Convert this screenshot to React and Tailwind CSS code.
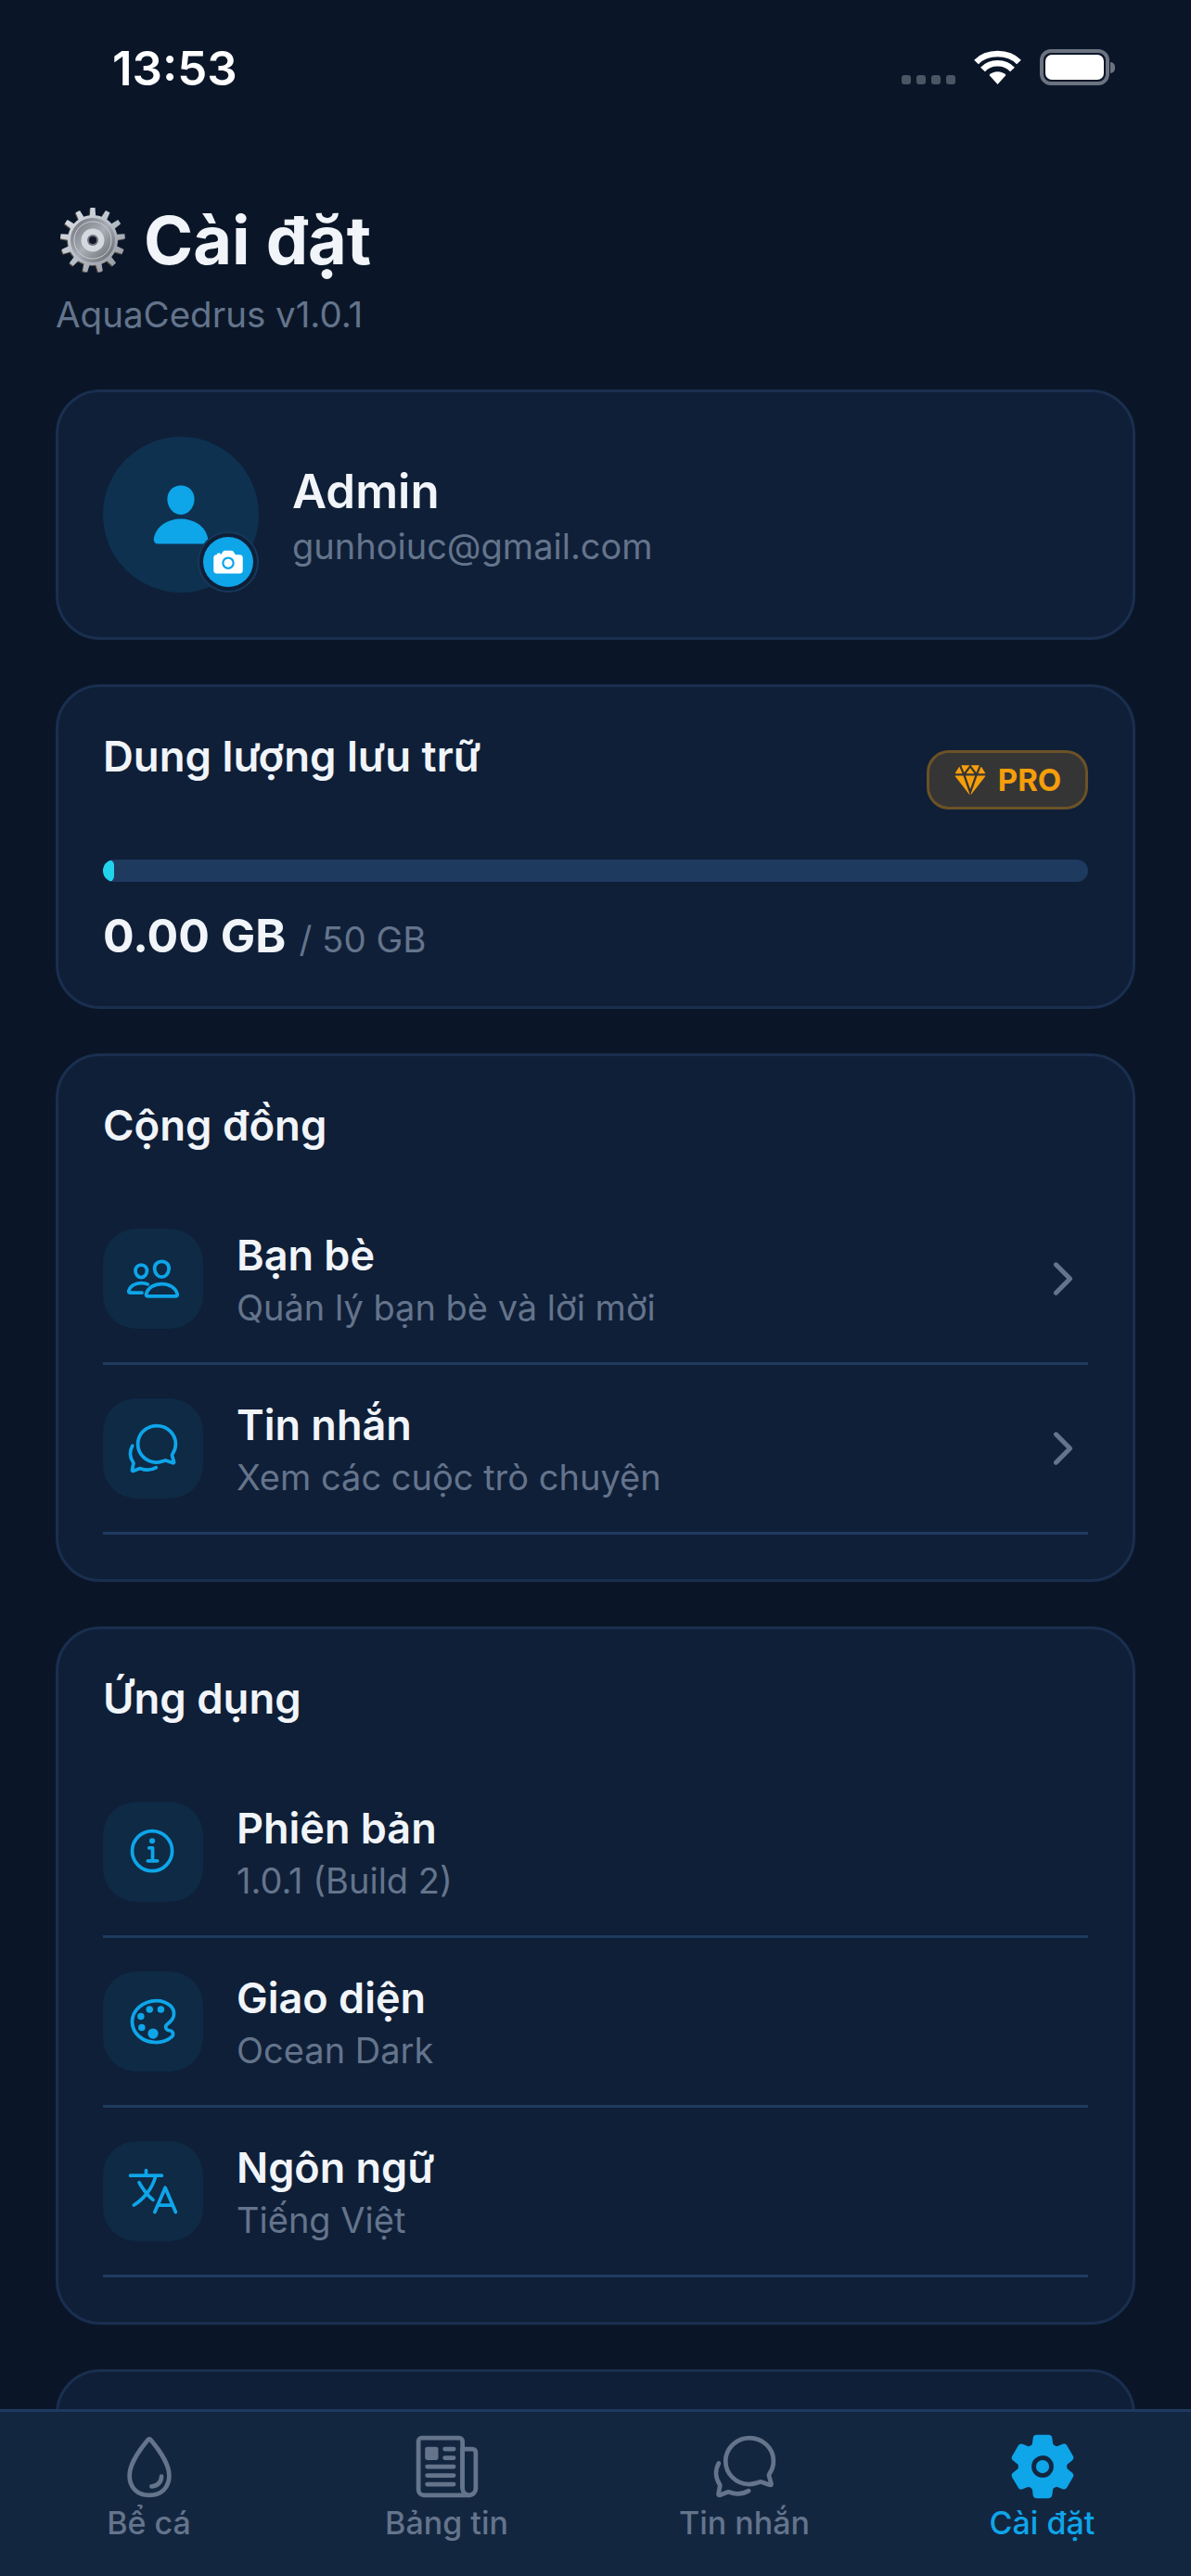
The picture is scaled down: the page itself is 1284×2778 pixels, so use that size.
import {
  IoCamera,
  IoChatbubblesOutline,
  IoChevronForward,
  IoColorPaletteOutline,
  IoDiamond,
  IoInformationCircleOutline,
  IoLanguageOutline,
  IoNewspaperOutline,
  IoPeopleOutline,
  IoPerson,
  IoSettings,
  IoWaterOutline,
} from "react-icons/io5";

const community = [
  { icon: IoPeopleOutline, title: "Bạn bè", sub: "Quản lý bạn bè và lời mời", arrow: true },
  { icon: IoChatbubblesOutline, title: "Tin nhắn", sub: "Xem các cuộc trò chuyện", arrow: true },
];

const app = [
  { icon: IoInformationCircleOutline, title: "Phiên bản", sub: "1.0.1 (Build 2)" },
  { icon: IoColorPaletteOutline, title: "Giao diện", sub: "Ocean Dark" },
  { icon: IoLanguageOutline, title: "Ngôn ngữ", sub: "Tiếng Việt" },
];

const tabs = [
  { icon: IoWaterOutline, label: "Bể cá" },
  { icon: IoNewspaperOutline, label: "Bảng tin" },
  { icon: IoChatbubblesOutline, label: "Tin nhắn" },
  { icon: IoSettings, label: "Cài đặt", active: true },
];

// the gear emoji, 13 teeth
function gearPath() {
  const teeth = 13;
  const pts = [];
  for (let i = 0; i < teeth; i++) {
    const a = (i / teeth) * Math.PI * 2 - Math.PI / 2;
    const step = (Math.PI * 2) / teeth;
    [
      [-0.5, 27],
      [-0.24, 27],
      [-0.15, 35],
      [0.15, 35],
      [0.24, 27],
    ].forEach(([o, r]) => {
      const t = a + o * step;
      pts.push(`${(35 + r * Math.cos(t)).toFixed(2)} ${(35 + r * Math.sin(t)).toFixed(2)}`);
    });
  }
  return "M" + pts.join("L") + "Z";
}

function GearEmoji() {
  return (
    <svg width="70" height="70" viewBox="0 0 70 70" className="shrink-0 ml-[5px]">
      <defs>
        <linearGradient id="gearBody" x1="0" y1="0" x2="1" y2="1">
          <stop offset="0" stopColor="#e2e6ec" />
          <stop offset="0.55" stopColor="#b4bac4" />
          <stop offset="1" stopColor="#8b8f98" />
        </linearGradient>
        <linearGradient id="gearRing" x1="0" y1="0" x2="1" y2="1">
          <stop offset="0" stopColor="#6d7078" />
          <stop offset="0.5" stopColor="#a9adb5" />
          <stop offset="1" stopColor="#5d6067" />
        </linearGradient>
      </defs>
      <path d={gearPath()} fill="#5f5648" transform="translate(-0.8 1)" />
      <path d={gearPath()} fill="url(#gearBody)" />
      <circle cx="35" cy="35" r="24" fill="url(#gearRing)" />
      <circle cx="35" cy="35" r="20" fill="none" stroke="#c7cad0" strokeWidth="1" />
      <circle cx="35" cy="35" r="12.5" fill="#d5d9df" />
      <circle cx="35" cy="35" r="6" fill="#6f7379" />
      <circle cx="35" cy="35" r="4" fill="#111827" />
    </svg>
  );
}

function StatusBar() {
  return (
    <div className="h-[132px] shrink-0 flex items-start justify-between pl-[121px] pr-[82px] pt-[46px]">
      <span className="text-[51px] leading-[56px] font-semibold text-white">13:53</span>
      <div className="flex items-start pt-[7px]">
        <div className="flex gap-[6px] mt-[28px] mr-[20px]">
          <span className="w-[10px] h-[10px] rounded-[3px] bg-[#4b5563]" />
          <span className="w-[10px] h-[10px] rounded-[3px] bg-[#4b5563]" />
          <span className="w-[10px] h-[10px] rounded-[3px] bg-[#4b5563]" />
          <span className="w-[10px] h-[10px] rounded-[3px] bg-[#4b5563]" />
        </div>
        <svg width="51" height="38" viewBox="0 0 51 38" className="mr-[20px]">
          <path d="M25.5 38 L16.5 28 C21 23 30 23 34.5 28 Z" fill="#fff" />
          <path d="M9.5 22 C17.5 13 33.5 13 41.5 22" fill="none" stroke="#fff" strokeWidth="6.5" />
          <path d="M2.5 14 C14 2 37 2 48.5 14" fill="none" stroke="#fff" strokeWidth="6.5" />
        </svg>
        <div className="flex items-center">
          <div className="w-[75px] h-[39px] rounded-[12px] border-[4px] border-[#6b7280] p-[2px]">
            <div className="w-full h-full rounded-[7px] bg-white" />
          </div>
          <div className="w-[5px] h-[12px] rounded-r-[5px] bg-[#6b7280] ml-[1px]" />
        </div>
      </div>
    </div>
  );
}

function Card({ className = "", children }) {
  return (
    <div className={`rounded-[48px] border-[3px] border-[#1a2f4f] bg-[#0f1f38] p-[48px] ${className}`}>
      {children}
    </div>
  );
}

function Row({ item }) {
  const Icon = item.icon;
  return (
    <div className="flex items-center py-[36px] border-b-[3px] border-[#1e3a5f]">
      <div className="w-[108px] h-[108px] rounded-[36px] bg-[#0e2a45] flex items-center justify-center shrink-0">
        <Icon size={60} className="text-[#0ea5e9]" />
      </div>
      <div className="ml-[36px] flex-1 h-[108px]">
        <div className="text-[45px] leading-[58px] font-semibold text-[#f1f5f9]">{item.title}</div>
        <div className="text-[38px] leading-[50px] text-[#64748b] mt-[2px]">{item.sub}</div>
      </div>
      {item.arrow && <IoChevronForward size={54} className="text-[#64748b]" />}
    </div>
  );
}

function Section({ title, items }) {
  return (
    <Card>
      <div className="text-[45.5px] leading-[54px] font-semibold text-[#f1f5f9] mb-[48px]">{title}</div>
      {items.map((item) => (
        <Row key={item.title} item={item} />
      ))}
    </Card>
  );
}

export default function App() {
  return (
    <div className="w-[1284px] h-[2778px] flex flex-col overflow-hidden bg-[#0a1628] font-['Inter',sans-serif]">
      <StatusBar />

      <main className="flex-1 min-h-0 overflow-hidden px-[60px]">
        <div className="flex items-center gap-[20px] h-[90px] mt-[82px]">
          <GearEmoji />
          <h1 className="text-[72px] leading-[90px] font-bold text-[#f1f5f9]">Cài đặt</h1>
        </div>
        <p className="text-[38.5px] leading-[50px] text-[#64748b] mb-[56px] mt-[10px]">AquaCedrus v1.0.1</p>

        <div className="flex flex-col gap-[48px]">
          <Card className="flex items-center">
            <div className="relative w-[168px] h-[168px] rounded-full bg-[#0e3150] flex items-center justify-center shrink-0">
              <IoPerson size={72} className="text-[#0ea5e9]" />
              <div className="absolute right-0 bottom-0 w-[66px] h-[66px] rounded-full border-[2px] border-[#16385a] bg-[#0f1f38] p-[4px]">
                <div className="w-full h-full rounded-full bg-[#0ea5e9] flex items-center justify-center">
                  <IoCamera size={36} className="text-white" />
                </div>
              </div>
            </div>
            <div className="ml-[36px] pt-[2px]">
              <div className="text-[51px] leading-[64px] font-semibold text-[#f1f5f9]">Admin</div>
              <div className="text-[38px] leading-[50px] text-[#64748b] mt-[2px]">gunhoiuc@gmail.com</div>
            </div>
          </Card>

          <Card>
            <div className="flex justify-between items-start">
              <div className="text-[45.5px] leading-[54px] font-semibold text-[#f1f5f9]">Dung lượng lưu trữ</div>
              <div className="mt-[20px] w-[174px] h-[64px] rounded-[24px] border-[3px] border-[#6b5226] bg-[#353535] flex items-center justify-center gap-[12px]">
                <IoDiamond size={36} className="text-[#f59e0b]" />
                <span className="text-[33px] leading-none font-bold text-[#f59e0b]">PRO</span>
              </div>
            </div>
            <div className="mt-[54px] h-[24px] rounded-full bg-[#1e3a5f] overflow-hidden">
              <div className="w-[12px] h-full rounded-full bg-[#22d3ee]" />
            </div>
            <div className="flex items-baseline h-[56px] mt-[30px]">
              <span className="text-[50px] leading-[56px] font-bold text-[#f1f5f9]">0.00 GB</span>
              <span className="text-[38.5px] leading-[56px] text-[#64748b] ml-[14px]">/ 50 GB</span>
            </div>
          </Card>

          <Section title="Cộng đồng" items={community} />
          <Section title="Ứng dụng" items={app} />
          <Card className="h-[300px]" />
        </div>
      </main>

      <nav className="h-[180px] shrink-0 grid grid-cols-4 border-t-[3px] border-[#1e3a5f] bg-[#132640] pt-[21px]">
        {tabs.map((tab) => {
          const Icon = tab.icon;
          return (
            <div
              key={tab.label}
              className={`flex flex-col items-center ${tab.active ? "text-[#0ea5e9]" : "text-[#64748b]"}`}
            >
              <div className="h-[76px] flex items-center">
                <Icon size={76} />
              </div>
              <span className="text-[34px] leading-[44px] font-medium mt-[1px]">{tab.label}</span>
            </div>
          );
        })}
      </nav>
    </div>
  );
}
